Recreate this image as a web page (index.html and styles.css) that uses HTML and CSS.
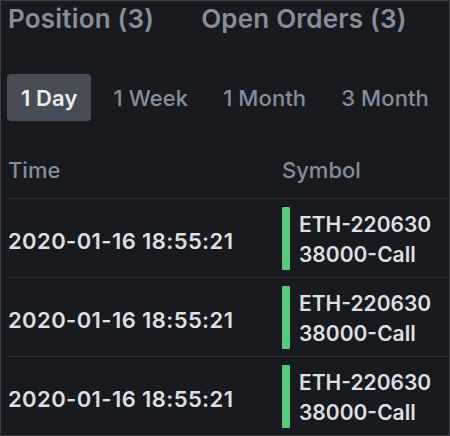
FILE: index.html
```html
<!DOCTYPE html>
<html lang="en">
<head>
<meta charset="utf-8">
<title>Positions</title>
<link rel="stylesheet" href="styles.css">
</head>
<body>
<div class="panel">
  <div class="titles">
    <span class="title">Position (3)</span>
    <span class="title">Open Orders (3)</span>
  </div>
  <div class="tabs">
    <span class="tab active">1 Day</span>
    <span class="tab">1 Week</span>
    <span class="tab">1 Month</span>
    <span class="tab">3 Month</span>
  </div>
  <div class="head">
    <span class="col-time">Time</span>
    <span class="col-sym">Symbol</span>
  </div>
  <div class="row">
    <span class="col-time date">2020-01-16 18:55:21</span>
    <div class="col-sym sym"><span class="bar"></span><span class="sym-text">ETH-220630<br>38000-Call</span></div>
  </div>
  <div class="row">
    <span class="col-time date">2020-01-16 18:55:21</span>
    <div class="col-sym sym"><span class="bar"></span><span class="sym-text">ETH-220630<br>38000-Call</span></div>
  </div>
  <div class="row">
    <span class="col-time date">2020-01-16 18:55:21</span>
    <div class="col-sym sym"><span class="bar"></span><span class="sym-text">ETH-220630<br>38000-Call</span></div>
  </div>
</div>
</body>
</html>
```

FILE: styles.css
```css
* { box-sizing: border-box; }
html, body { margin: 0; padding: 0; background: #181a1f; }
body { font-family: Inter, "Open Sans", sans-serif; }
.panel {
  width: 450px;
  height: 436px;
  border: 1px solid #3a3e45;
  background: #181a1f;
  overflow: hidden;
  padding-top: 3px;
}
.titles {
  display: flex;
  gap: 47px;
  padding-left: 7px;
  font-size: 26px;
  line-height: 30px;
  font-weight: 600;
  letter-spacing: 0.2px;
  color: #848e9c;
}
.tabs {
  display: flex;
  align-items: center;
  gap: 9px;
  margin-top: 40px;
  padding-left: 6px;
}
.tab {
  height: 47px;
  display: flex;
  align-items: center;
  padding: 0 13px;
  font-size: 22px;
  font-weight: 500;
  letter-spacing: 0.1px;
  color: #848e9c;
  border-radius: 4px;
}
.tab.active {
  padding: 0 14px;
  background: #474d57;
  color: #eaecef;
  font-weight: 600;
}
.head {
  display: grid;
  grid-template-columns: 274px 1fr;
  margin-top: 37px;
  padding: 0 0 16px 7px;
  font-size: 22px;
  line-height: 24px;
  font-weight: 500;
  color: #848e9c;
}
.row {
  display: grid;
  grid-template-columns: 274px 1fr;
  align-items: center;
  margin-left: 6px;
  padding: 8px 0 7px 1px;
  border-top: 1px solid #2b2f36;
}
.date {
  font-size: 22px;
  font-weight: 600;
  letter-spacing: 0.4px;
  color: #dcdfe4;
  padding-top: 5px;
}
.sym {
  display: flex;
  align-items: center;
  gap: 9px;
}
.bar {
  width: 8px;
  height: 63px;
  background: #55c97c;
  border-radius: 1px;
}
.sym-text {
  font-size: 21px;
  line-height: 30px;
  font-weight: 600;
  color: #dcdfe4;
  padding-top: 3px;
}
```
